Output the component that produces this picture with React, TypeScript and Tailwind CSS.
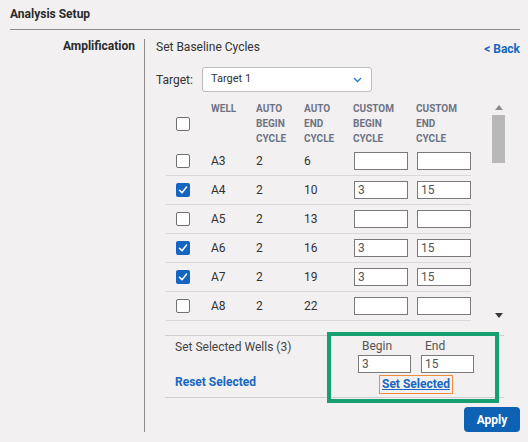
import React from "react";

const rows = [
  { well: "A3", ab: "2", ae: "6", cb: "", ce: "", checked: false },
  { well: "A4", ab: "2", ae: "10", cb: "3", ce: "15", checked: true },
  { well: "A5", ab: "2", ae: "13", cb: "", ce: "", checked: false },
  { well: "A6", ab: "2", ae: "16", cb: "3", ce: "15", checked: true },
  { well: "A7", ab: "2", ae: "19", cb: "3", ce: "15", checked: true },
  { well: "A8", ab: "2", ae: "22", cb: "", ce: "", checked: false },
];

function Check({ checked }: { checked: boolean }) {
  if (checked) {
    return (
      <div className="w-[14px] h-[14px] rounded-[2px] bg-[#1565c0] flex items-center justify-center">
        <svg width="10" height="10" viewBox="0 0 10 10" fill="none">
          <path d="M1.5 5.2 L4 7.8 L8.6 2" stroke="#fff" strokeWidth="1.5" strokeLinecap="round" strokeLinejoin="round" />
        </svg>
      </div>
    );
  }
  return <div className="w-[14px] h-[14px] rounded-[2px] border border-[#707070] bg-white" />;
}

function Field({ value, w = "w-[54px]" }: { value: string; w?: string }) {
  return (
    <div className={`${w} h-[18px] border border-[#7a7a7a] bg-white pl-[3px] text-[12px] leading-[16px] text-[#555]`}>
      {value}
    </div>
  );
}

export default function App() {
  return (
    <div
      className="w-[528px] h-[442px] bg-[#f2f0f1] text-[#333] overflow-hidden"
      style={{ fontFamily: "Roboto, 'Noto Sans', sans-serif" }}
    >
      <div className="h-[29px] px-[10px] pt-[6px] text-[12px] leading-[16px] font-bold text-[#2b2b2b]">
        Analysis Setup
      </div>
      <div className="ml-[10px] w-[510px] h-px bg-[#8c8c8c]" />

      <div className="flex mt-[9px] h-[393px] pr-[8px]">
        <div className="w-[144px] pr-[9px] text-right text-[12px] leading-[15px] font-bold text-[#2b2b2b]">
          Amplification
        </div>
        <div className="flex-1 border-l border-[#8c8c8c] pl-[11px] flex flex-col">
          <div className="flex justify-between h-[16px] text-[12px] leading-[16px]">
            <span className="text-[#333]">Set Baseline Cycles</span>
            <span className="font-bold text-[#1867c0] mt-[2px]">&lt; Back</span>
          </div>

          <div className="flex items-center mt-[12px] h-[25px]">
            <span className="text-[12px] w-[46px]">Target:</span>
            <div className="w-[170px] h-[25px] rounded-[3px] border border-[#bdbdbd] bg-white flex items-center justify-between pl-[8px] pr-[9px]">
              <span className="text-[11px] text-[#333]">Target 1</span>
              <svg width="9" height="6" viewBox="0 0 9 6" fill="none">
                <path d="M1 1 L4.5 4.5 L8 1" stroke="#2b7bd1" strokeWidth="1.4" />
              </svg>
            </div>
          </div>

          <div className="flex mt-[9px] ml-[10px] h-[222px]">
            <div className="w-[305px]">
              <div className="flex h-[46px] text-[10px] leading-[15px] font-bold text-[#6e7384]">
                <div className="w-[45px] pl-[10px] flex items-center">
                  <Check checked={false} />
                </div>
                <div className="w-[45px]">WELL</div>
                <div className="w-[48px]">AUTO<br />BEGIN<br />CYCLE</div>
                <div className="w-[49px]">AUTO<br />END<br />CYCLE</div>
                <div className="w-[63px]">CUSTOM<br />BEGIN<br />CYCLE</div>
                <div className="w-[55px]">CUSTOM<br />END<br />CYCLE</div>
              </div>
              {rows.map((r) => (
                <div key={r.well} className="flex items-center h-[29px] border-b border-[#d9d9d9] text-[12px]">
                  <div className="w-[45px] pl-[10px]">
                    <Check checked={r.checked} />
                  </div>
                  <div className="w-[45px]">{r.well}</div>
                  <div className="w-[48px]">{r.ab}</div>
                  <div className="w-[49px]">{r.ae}</div>
                  <div className="w-[63px] pl-[1px]">
                    <Field value={r.cb} />
                  </div>
                  <div className="w-[55px] pl-[1px]">
                    <Field value={r.ce} />
                  </div>
                </div>
              ))}
            </div>
            <div className="ml-[21px] w-[13px] flex flex-col items-center">
              <svg className="mt-[4px]" width="8" height="5" viewBox="0 0 8 5">
                <path d="M0 5 L4 0 L8 5 Z" fill="#8a8a8a" />
              </svg>
              <div className="mt-[5px] w-[13px] h-[48px] bg-[#b8b8b8]" />
              <div className="flex-1" />
              <svg className="mb-[4px]" width="8" height="5" viewBox="0 0 8 5">
                <path d="M0 0 L4 5 L8 0 Z" fill="#3a3a3a" />
              </svg>
            </div>
          </div>

          <div className="relative flex mt-[13px] ml-[9px] w-[339px] h-[63px] border-y border-[#cfcfcf]">
            <div className="flex-1 pl-[10px] pt-[3px]">
              <div className="text-[12px] leading-[16px] text-[#444]">Set Selected Wells (3)</div>
              <div className="mt-[19px] text-[12px] leading-[16px] font-bold text-[#1867c0]">Reset Selected</div>
            </div>
            <div className="w-[116px] mr-[30px] pt-[3px] flex flex-col">
              <div className="flex gap-[10px] text-[12px] leading-[14px] text-[#555]">
                <div className="w-[53px] pl-[4px]">Begin</div>
                <div className="w-[53px] pl-[4px]">End</div>
              </div>
              <div className="flex gap-[10px] mt-[2px]">
                <Field value="3" w="w-[53px]" />
                <Field value="15" w="w-[53px]" />
              </div>
              <div className="self-center mt-[2px] h-[19px] px-[2px] border border-[#f08a3c] text-[12px] leading-[17px] font-bold text-[#1867c0] underline">
                Set Selected
              </div>
            </div>
            <div className="absolute top-[-4px] left-[162px] w-[172px] h-[71px] border-[4px] border-[#16a06f] pointer-events-none" />
          </div>

          <div className="flex justify-end mt-[9px]">
            <button className="w-[56px] h-[25px] rounded-[4px] bg-[#0d62b3] text-white text-[12px] font-bold">
              Apply
            </button>
          </div>
        </div>
      </div>
    </div>
  );
}
